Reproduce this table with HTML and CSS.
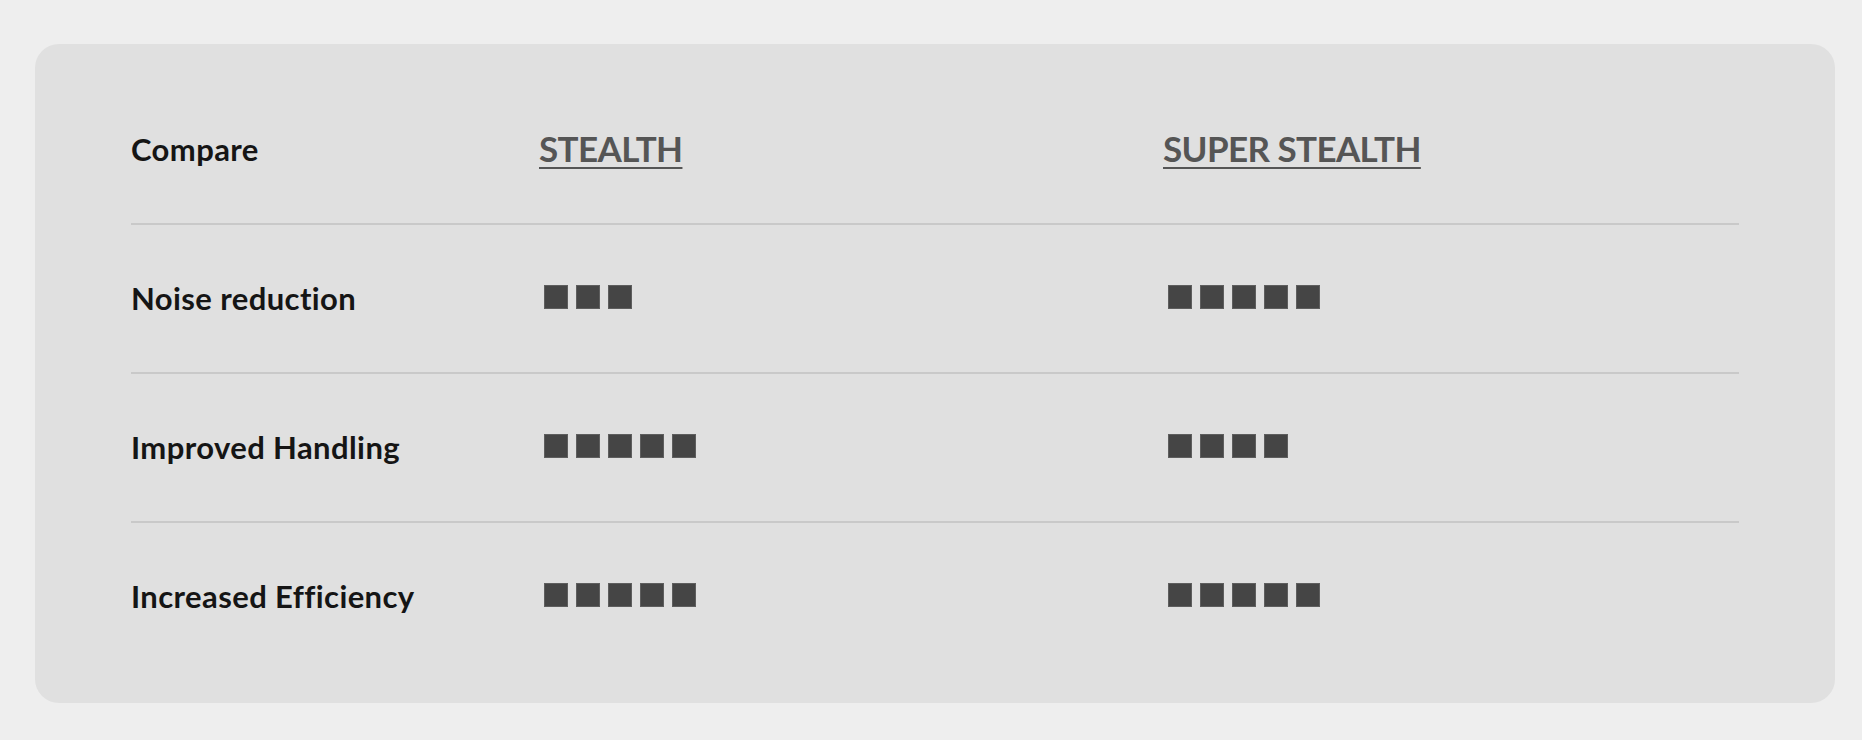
FILE: index.html
```html
<!DOCTYPE html>
<html lang="en">
<head>
<meta charset="utf-8">
<title>Compare</title>
<link rel="stylesheet" href="styles.css">
</head>
<body>
<section class="card">
  <div class="table">
    <div class="row head">
      <div class="label">Compare</div>
      <div class="cell"><a class="product" href="#">STEALTH</a></div>
      <div class="cell"><a class="product" href="#">SUPER STEALTH</a></div>
    </div>
    <div class="row">
      <div class="label">Noise reduction</div>
      <div class="cell"><div class="rating"><span class="sq"></span><span class="sq"></span><span class="sq"></span></div></div>
      <div class="cell"><div class="rating"><span class="sq"></span><span class="sq"></span><span class="sq"></span><span class="sq"></span><span class="sq"></span></div></div>
    </div>
    <div class="row">
      <div class="label">Improved Handling</div>
      <div class="cell"><div class="rating"><span class="sq"></span><span class="sq"></span><span class="sq"></span><span class="sq"></span><span class="sq"></span></div></div>
      <div class="cell"><div class="rating"><span class="sq"></span><span class="sq"></span><span class="sq"></span><span class="sq"></span></div></div>
    </div>
    <div class="row last">
      <div class="label">Increased Efficiency</div>
      <div class="cell"><div class="rating"><span class="sq"></span><span class="sq"></span><span class="sq"></span><span class="sq"></span><span class="sq"></span></div></div>
      <div class="cell"><div class="rating"><span class="sq"></span><span class="sq"></span><span class="sq"></span><span class="sq"></span><span class="sq"></span></div></div>
    </div>
  </div>
</section>
</body>
</html>
```

FILE: styles.css
```css
html, body {
  margin: 0;
  padding: 0;
  background: #eeeeee;
}
body {
  padding: 44px 0 0 35px;
  font-family: Lato, "Noto Sans", sans-serif;
}
.card {
  width: 1800px;
  box-sizing: border-box;
  background: #e0e0e0;
  border-radius: 24px;
  padding: 32px 96px 33px;
}
.table {
  display: flex;
  flex-direction: column;
}
.row {
  display: grid;
  grid-template-columns: 408px 624px 1fr;
  align-items: center;
  height: 147px;
  border-bottom: 2px solid #c9c9c9;
}
.row.last {
  border-bottom: none;
}
.label {
  font-weight: 700;
  font-size: 31px;
  color: #151515;
  letter-spacing: 0.4px;
  font-variant-ligatures: none;
  margin-top: -2px;
}
.product {
  display: inline-block;
  margin-top: -4px;
  font-weight: 700;
  font-size: 35px;
  color: #555555;
  letter-spacing: -0.6px;
  text-decoration: underline;
  text-decoration-thickness: 2px;
  text-underline-offset: 5px;
}
.rating {
  display: flex;
  gap: 8px;
  padding-left: 5px;
  margin-top: -4px;
}
.sq {
  width: 24px;
  height: 24px;
  box-sizing: border-box;
  background: #454545;
  border: 1px solid #5e5e5e;
}
```
